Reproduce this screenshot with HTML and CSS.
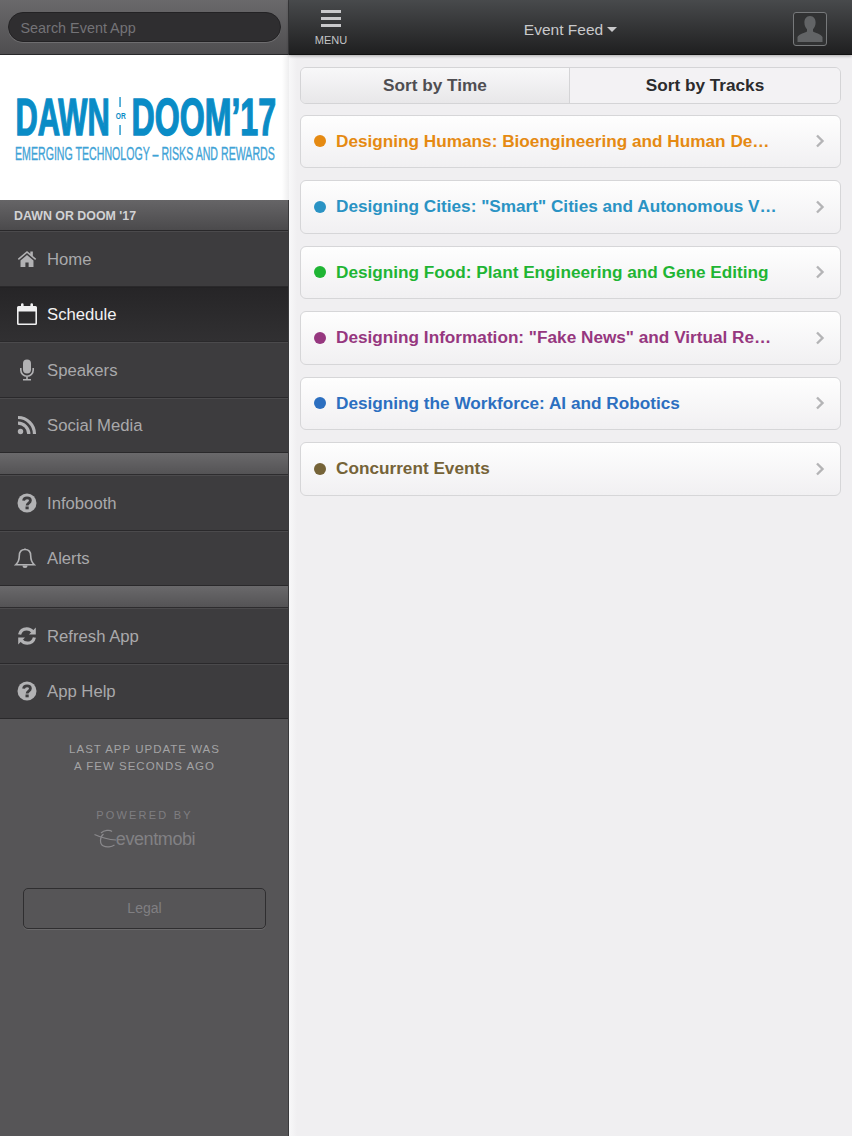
FILE: index.html
```html
<!DOCTYPE html>
<html lang="en">
<head>
<meta charset="utf-8">
<title>Event Feed</title>
<link rel="stylesheet" href="styles.css">
</head>
<body>
<div class="app">
  <aside class="sidebar">
    <div class="search-bar"><div class="search-field">Search Event App</div></div>
    <div class="logo">
      <svg class="logo-svg" width="268" height="76" viewBox="0 -10 268 76">
        <text class="logo-main" transform="translate(0.500 38.500) scale(.605 1)">DAWN</text>
        <rect class="logo-fill" x="104.400" y="1" width="1.300" height="10"/>
        <text class="logo-or" transform="translate(100.800 22.500) scale(.74 1)">OR</text>
        <rect class="logo-fill" x="104.400" y="29" width="1.300" height="10"/>
        <text class="logo-main" transform="translate(116.500 38.500) scale(.63 1)">DOOM’17</text>
        <text class="logo-sub" transform="translate(0 63.500) scale(.59 1)">EMERGING TECHNOLOGY – RISKS AND REWARDS</text>
      </svg>
    </div>
    <div class="section-title">DAWN OR DOOM '17</div>
    <nav class="nav-group">
      <a class="nav-item"><span class="nav-icon"><svg width="20" height="18" viewBox="0 0 22 20"><path class="i-fill" d="M11 1 0.800 9.800l1.100 1.300L11 3.400l9.100 7.700 1.100-1.300L17.500 6.600V1.600h-2.800v2.600zM3.800 11.600V19h5.400v-5.200h3.600V19h5.400v-7.400L11 5.500z"/></svg></span><span>Home</span></a>
      <a class="nav-item active"><span class="nav-icon"><svg width="22" height="23" viewBox="0 0 22 23"><path class="i-active" d="M2.500 3H5V1.600a1.300 1.300 0 0 1 2.600 0V3h6.800V1.600a1.300 1.300 0 0 1 2.600 0V3h2.500A1.500 1.500 0 0 1 21 4.500V20.500A1.500 1.500 0 0 1 19.500 22H2.500A1.500 1.500 0 0 1 1 20.500V4.500A1.500 1.500 0 0 1 2.500 3zM2.600 8.500V20.400H19.400V8.500z"/></svg></span><span>Schedule</span></a>
      <a class="nav-item"><span class="nav-icon"><svg width="16" height="22" viewBox="0 0 16 22"><rect class="i-fill" x="4" y="0.500" width="8" height="14" rx="4"/><path class="i-stroke" d="M1.800 9v2a6.200 6.200 0 0 0 12.400 0V9M8 17.200V20.500M4 20.800H12"/></svg></span><span>Speakers</span></a>
      <a class="nav-item"><span class="nav-icon"><svg width="20" height="20" viewBox="0 0 20 20"><circle class="i-fill" cx="3.500" cy="16.500" r="2.700"/><path class="i-thick" d="M1 8.200A10.800 10.800 0 0 1 11.800 19M1 2.500A16.500 16.500 0 0 1 17.500 19"/></svg></span><span>Social Media</span></a>
    </nav>
    <div class="nav-spacer"></div>
    <nav class="nav-group">
      <a class="nav-item"><span class="nav-icon"><svg width="20" height="20" viewBox="0 0 20 20"><circle class="i-fill" cx="10" cy="10" r="9.500"/><path class="i-q" d="M6.600 7.600C6.800 5.600 8.200 4.800 10 4.800c2 0 3.400 1.100 3.400 2.800 0 2.600-3.300 2.500-3.300 4.900"/><rect class="i-dark" x="8.500" y="13.500" width="3.200" height="2.800"/></svg></span><span>Infobooth</span></a>
      <a class="nav-item"><span class="nav-icon nav-icon-bell"><svg width="22" height="23" viewBox="0 0 22 23"><path class="i-stroke" d="M11 2.500c-3.800 0-5.700 2.800-5.700 6.300 0 4-1.200 6.800-3.600 9h18.600c-2.400-2.200-3.600-5-3.600-9 0-3.500-1.900-6.300-5.700-6.300z"/><path class="i-fill" d="M9.800 2.600a1.200 1.200 0 0 1 2.400 0zM8.500 18.500h5a2.500 2.500 0 0 1-5 0z"/></svg></span><span>Alerts</span></a>
    </nav>
    <div class="nav-spacer"></div>
    <nav class="nav-group">
      <a class="nav-item"><span class="nav-icon"><svg width="20" height="20" viewBox="0 0 20 20"><path class="i-thick" d="M2.600 8.500C3.400 5 6.300 2.800 9.800 2.800c2.500 0 4.400 1 5.900 2.900M17.400 11.500c-.8 3.500-3.700 5.700-7.200 5.700-2.500 0-4.400-1-5.900-2.900"/><path class="i-fill" d="M18.800 1.500V8.400H12zM1.200 18.500V11.600H8z"/></svg></span><span>Refresh App</span></a>
      <a class="nav-item"><span class="nav-icon"><svg width="20" height="20" viewBox="0 0 20 20"><circle class="i-fill" cx="10" cy="10" r="9.500"/><path class="i-q" d="M6.600 7.600C6.800 5.600 8.200 4.800 10 4.800c2 0 3.400 1.100 3.400 2.800 0 2.600-3.300 2.500-3.300 4.900"/><rect class="i-dark" x="8.500" y="13.500" width="3.200" height="2.800"/></svg></span><span>App Help</span></a>
    </nav>
    <div class="side-footer">
      <p class="update">LAST APP UPDATE WAS<br>A FEW SECONDS AGO</p>
      <p class="powered">POWERED BY</p>
      <div class="brand"><svg width="22" height="22" viewBox="0 0 22 22"><path class="brand-line" d="M0.500 6.500C6 9 13 11.500 22 12M7 5c3-3 9-3.500 11-1.500M9.500 6c-4 3-4 10 0 12 3 1.500 8 1 11-1"/></svg><span>eventmobi</span></div>
      <div class="legal">Legal</div>
    </div>
  </aside>
  <main class="main">
    <header class="topbar">
      <div class="menu-btn">
        <svg width="20" height="17" viewBox="0 0 20 17"><path class="menu-bars" d="M0 1.500H20M0 8.500H20M0 15.500H20"/></svg>
        <span>MENU</span>
      </div>
      <div class="title">Event Feed<span class="caret"></span></div>
      <div class="avatar"><svg width="32" height="32" viewBox="0 0 32 32"><path class="avatar-p" d="M16 3c3.800 0 5.600 3 5.600 6.500 0 3-1.200 5.400-2.600 6.800v2.200c1.800 1.500 8 2.200 9.500 5.500V29H3.500v-5c1.500-3.300 7.700-4 9.500-5.500v-2.200c-1.400-1.400-2.600-3.800-2.600-6.800C10.400 6 12.200 3 16 3z"/></svg></div>
    </header>
    <div class="content">
      <div class="tabs">
        <div class="tab">Sort by Time</div>
        <div class="tab selected">Sort by Tracks</div>
      </div>
      <ul class="tracks">
        <li class="track c-orange"><span class="dot"></span><span class="track-name">Designing Humans: Bioengineering and Human De…</span><svg class="chev" width="10" height="14" viewBox="0 0 10 14"><path d="M2 1.500 7.500 7 2 12.500"/></svg></li>
        <li class="track c-teal"><span class="dot"></span><span class="track-name">Designing Cities: "Smart" Cities and Autonomous V…</span><svg class="chev" width="10" height="14" viewBox="0 0 10 14"><path d="M2 1.500 7.500 7 2 12.500"/></svg></li>
        <li class="track c-green"><span class="dot"></span><span class="track-name">Designing Food: Plant Engineering and Gene Editing</span><svg class="chev" width="10" height="14" viewBox="0 0 10 14"><path d="M2 1.500 7.500 7 2 12.500"/></svg></li>
        <li class="track c-purple"><span class="dot"></span><span class="track-name">Designing Information: "Fake News" and Virtual Re…</span><svg class="chev" width="10" height="14" viewBox="0 0 10 14"><path d="M2 1.500 7.500 7 2 12.500"/></svg></li>
        <li class="track c-blue"><span class="dot"></span><span class="track-name">Designing the Workforce: AI and Robotics</span><svg class="chev" width="10" height="14" viewBox="0 0 10 14"><path d="M2 1.500 7.500 7 2 12.500"/></svg></li>
        <li class="track c-olive"><span class="dot"></span><span class="track-name">Concurrent Events</span><svg class="chev" width="10" height="14" viewBox="0 0 10 14"><path d="M2 1.500 7.500 7 2 12.500"/></svg></li>
      </ul>
    </div>
  </main>
</div>
</body>
</html>
```
FILE: styles.css
```css
* { box-sizing: border-box; }
html, body { margin: 0; padding: 0; height: 100%; overflow: hidden; }
body { font-family: "Liberation Sans", Arial, sans-serif; background: #f0eff1; }
.app { display: grid; grid-template-columns: 289px 1fr; height: 1136px; }

/* Sidebar */
.sidebar { display: flex; flex-direction: column; background: #565557; border-right: 1px solid #3a3a3c; height: 1136px; }
.search-bar { height: 55px; padding: 12px 7px 0 8px; background: linear-gradient(#6a696b, #4f4e50); border-bottom: 1px solid #28282a; }
.search-field { height: 30px; border-radius: 15px; background: #2f2e30; border: 1px solid #232224; box-shadow: 0 1px 0 #6e6d6f; color: #747377; font-size: 14.400px; line-height: 30px; padding-left: 11.500px; }
.logo { height: 145px; margin-right: -1px; background: linear-gradient(90deg, #fff 282px, #eeeeef); padding: 31px 0 0 15px; }
.logo-svg { display: block; }
.logo-main { font-weight: 700; font-size: 51px; fill: #0a8cc6; stroke: #0a8cc6; stroke-width: 1.400; }
.logo-or { font-weight: 700; font-size: 9px; fill: #0a8cc6; }
.logo-fill { fill: #0a8cc6; }
.logo-sub { font-size: 18px; fill: #3fa3d6; stroke: #3fa3d6; stroke-width: .35; }
.section-title { height: 31px; padding: 1px 0 0 14px; background: linear-gradient(#666567, #4b4a4c); border-bottom: 1px solid #29282a; color: #d2d2d4; font-size: 12.400px; font-weight: 700; line-height: 30px; }
.nav-group { display: flex; flex-direction: column; }
.nav-item { display: flex; align-items: center; height: 55.500px; background: #3d3c3e; border-top: 1px solid #4b4a4c; border-bottom: 1px solid #2a292b; color: #a9a9ab; font-size: 16.700px; }
.nav-item > span:last-child { padding-top: 2px; }
.nav-item.active { background: linear-gradient(#262527, #313032); color: #f2f2f3; border-top-color: #232224; }
.nav-icon { flex: 0 0 47px; display: flex; justify-content: center; padding-left: 7px; }
.nav-icon svg { display: block; }
.nav-icon-bell { padding-left: 3px; }
.i-fill { fill: #b2b2b4; }
.i-active { fill: #f0f0f1; fill-rule: evenodd; }
.i-stroke { fill: none; stroke: #b2b2b4; stroke-width: 1.600; }
.i-thick { fill: none; stroke: #b2b2b4; stroke-width: 3.200; }
.i-q { fill: none; stroke: #3d3c3e; stroke-width: 2.800; }
.i-dark { fill: #3d3c3e; }
.nav-spacer { height: 22px; background: linear-gradient(#6a696b, #545355); border-bottom: 1px solid #2d2c2e; }
.side-footer { display: flex; flex-direction: column; align-items: center; padding: 22px 22px 0 23px; text-align: center; }
.update { margin: 0; color: #a3a3a5; font-size: 11.500px; line-height: 17px; letter-spacing: 1px; }
.powered { margin: 32px 0 0; color: #7f7e81; font-size: 11px; line-height: 16px; letter-spacing: 2.200px; }
.brand { display: flex; align-items: center; height: 24px; margin-top: 4px; color: #828184; font-size: 18px; letter-spacing: -0.400px; }
.brand svg { flex: none; }
.brand-line { fill: none; stroke: #8a898c; stroke-width: 1.200; }
.legal { align-self: stretch; height: 41px; margin-top: 37px; border: 1px solid #2f2e30; border-radius: 5px; box-shadow: 0 1px 0 #69686a; color: #807f82; font-size: 14px; line-height: 39px; }

/* Main */
.main { display: flex; flex-direction: column; min-width: 0; }
.topbar { display: flex; align-items: center; height: 55px; background: linear-gradient(#484a4c, #1f1f20); border-bottom: 1px solid #111; box-shadow: 0 1px 3px rgba(0,0,0,.3); position: relative; }
.menu-btn { flex: 0 0 84px; display: flex; flex-direction: column; align-items: center; color: #c4c4c6; font-size: 11px; padding-top: 1px; }
.menu-btn span { margin-top: 7px; }
.menu-bars { fill: none; stroke: #c9c9cb; stroke-width: 3; }
.title { flex: 1; color: #c9c9cb; font-size: 15.500px; text-align: center; padding: 6px 25px 0 0; }
.caret { display: inline-block; width: 0; height: 0; margin: 0 0 3px 4px; border-left: 5px solid transparent; border-right: 5px solid transparent; border-top: 5px solid #c9c9cb; }
.avatar { width: 34px; height: 34px; margin: 3px 25px 0 0; border: 1px solid #77797b; border-radius: 3px; background: #313233; overflow: hidden; }
.avatar svg { display: block; }
.avatar-p { fill: #626466; }
.content { flex: 1; padding: 12px 11px 0 11px; background: linear-gradient(90deg, #f8f8f9, #f0eff1 8px); }
.tabs { display: flex; height: 37px; border: 1px solid #d4d4d6; border-radius: 6px; overflow: hidden; }
.tab { flex: 0 0 268px; text-align: center; font-size: 17.200px; font-weight: 700; line-height: 35px; color: #4f4e52; background: linear-gradient(#f8f8f9, #e8e7e9); }
.tab.selected { flex: 1; color: #2b2b2d; background: #f3f2f4; border-left: 1px solid #d4d4d6; }
.tracks { display: flex; flex-direction: column; gap: 12px; list-style: none; margin: 10.500px 0 0; padding: 0; }
.track { display: flex; align-items: center; height: 53.500px; padding: 0 15px 0 13px; border: 1px solid #d6d6d8; border-radius: 6px; background: linear-gradient(#fefefe, #f1f0f2); font-size: 17.200px; font-weight: 700; }
.dot { flex: none; width: 12px; height: 12px; border-radius: 50%; margin-right: 10px; background: currentColor; }
.track-name { flex: 1; white-space: nowrap; overflow: hidden; }
.chev { flex: none; }
.chev path { fill: none; stroke: #b4b4b6; stroke-width: 2.400; }
.c-orange { color: #e58a12; }
.c-teal { color: #2a93c4; }
.c-green { color: #1fb534; }
.c-purple { color: #96377f; }
.c-blue { color: #2c6fc0; }
.c-olive { color: #756338; }
```
